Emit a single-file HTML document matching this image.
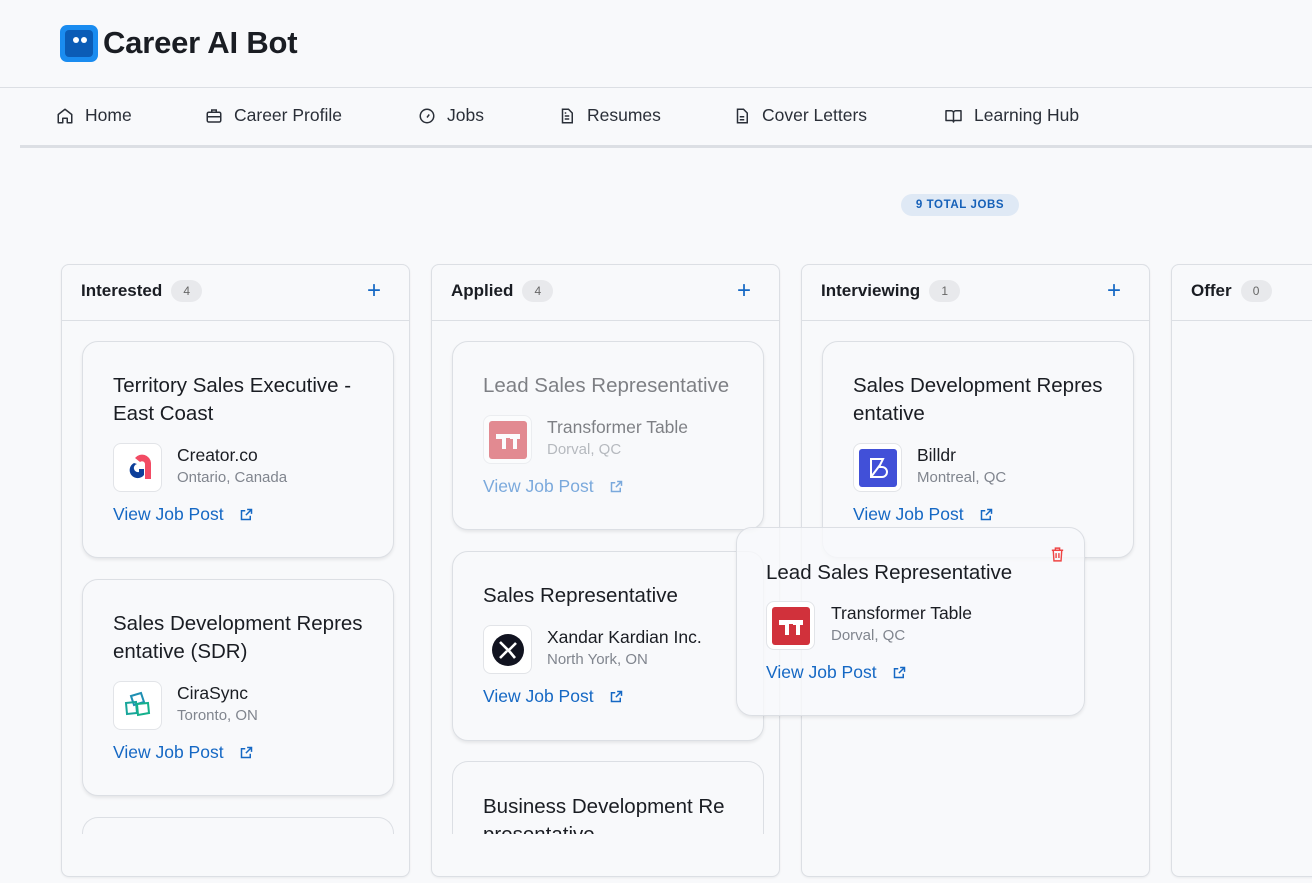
<!DOCTYPE html>
<html><head><meta charset="utf-8"><style>
*{box-sizing:border-box;margin:0;padding:0}
body{width:1312px;height:883px;overflow:hidden;background:#f8f9fb;font-family:"Liberation Sans",Arial,sans-serif;color:#1a1d23;position:relative}
.abs{position:absolute}
.hdr{left:0;top:0;width:1312px;height:88px;border-bottom:1px solid #dcdfe4}
.logo{left:60px;top:25px;width:38px;height:37px;border-radius:7px;background:#1a8cf0}
.logo i{position:absolute;left:5px;top:5px;width:28px;height:27px;border-radius:4px;background:#0b5cb6}
.logo b{position:absolute;top:12px;width:6px;height:6px;border-radius:50%;background:#fff}
.title{left:103px;top:25px;font-size:31px;font-weight:bold;letter-spacing:-0.2px}
.navline{left:20px;top:145px;width:1292px;height:3px;background:#dcdfe4}
.ni{position:absolute;top:105px;font-size:17.5px;color:#2a2f38;display:flex;align-items:center}
.ni svg{margin-right:11px}
.badge{left:901px;top:194px;width:118px;height:22px;border-radius:11px;background:#dfe9f5;color:#1560b8;font-size:11.5px;font-weight:bold;letter-spacing:0.6px;text-align:center;line-height:22px}
.col{position:absolute;top:264px;width:349px;height:613px;border:1px solid #dcdfe4;border-radius:8px;background:#f8f9fb;box-shadow:0 1px 2px rgba(0,0,0,.06);overflow:hidden}
.ch{height:56px;border-bottom:1px solid #dcdfe4;display:flex;align-items:center;padding-left:19px;padding-bottom:3px;font-size:17px;font-weight:bold}
.cnt{display:inline-block;margin-left:9px;width:31px;height:22px;border-radius:11px;background:#e8e9ec;color:#666;font-size:12px;font-weight:normal;text-align:center;line-height:22px}
.plus{position:absolute;right:28px;top:15px;font-size:24px;color:#1568c4;font-weight:normal;line-height:22px}
.card{position:absolute;width:312px;border:1px solid #dcdfe4;border-radius:16px;background:#f8f9fb;box-shadow:0 2px 3px rgba(0,0,0,.08);overflow:hidden}
.ct{position:absolute;left:30px;top:30px;width:262px;font-size:20.5px;line-height:28px;color:#1a1d23}
.lg{position:absolute;left:30px;width:49px;height:49px;border:1px solid #e2e4e8;border-radius:8px;background:#fff;display:flex;align-items:center;justify-content:center}
.cn{position:absolute;left:94px;font-size:17.5px;color:#1a1d23}
.cl{position:absolute;left:94px;font-size:15px;color:#80858e}
.vj{position:absolute;left:30px;font-size:17.5px;color:#1568c4;display:flex;align-items:center}
.vj svg{margin-left:15px}
</style></head><body>
<div class="abs hdr"></div>
<div class="abs logo"><i></i><b style="left:13px"></b><b style="left:21px"></b></div>
<div class="abs title">Career AI Bot</div>
<div class="abs navline"></div>

<div class="ni" style="left:56px"><svg width="18" height="18" viewBox="0 0 24 24" fill="none" stroke="#2a2f38" stroke-width="2" stroke-linejoin="round"><path d="M3 10l9-7 9 7v11H15v-6h-6v6H3z"/></svg>Home</div>
<div class="ni" style="left:205px"><svg width="18" height="18" viewBox="0 0 24 24" fill="none" stroke="#2a2f38" stroke-width="2"><rect x="3" y="7" width="18" height="13" rx="2"/><path d="M9 7V4h6v3M3 13h18"/></svg>Career Profile</div>
<div class="ni" style="left:418px"><svg width="18" height="18" viewBox="0 0 24 24" fill="none" stroke="#2a2f38" stroke-width="2"><circle cx="12" cy="12" r="9"/><path d="M12 14l3-4"/></svg>Jobs</div>
<div class="ni" style="left:558px"><svg width="18" height="18" viewBox="0 0 24 24" fill="none" stroke="#2a2f38" stroke-width="2"><path d="M6 3h8l5 5v13H6z"/><path d="M9 12h6M9 16h6M9 8h2"/></svg>Resumes</div>
<div class="ni" style="left:733px"><svg width="18" height="18" viewBox="0 0 24 24" fill="none" stroke="#2a2f38" stroke-width="2"><path d="M6 3h8l5 5v13H6z"/><path d="M9 13h6M9 17h6"/></svg>Cover Letters</div>
<div class="ni" style="left:944px"><svg width="19" height="18" viewBox="0 0 24 24" fill="none" stroke="#2a2f38" stroke-width="2" stroke-linejoin="round"><path d="M2 5h7a3 3 0 0 1 3 3v12a2 2 0 0 0-2-2H2zM22 5h-7a3 3 0 0 0-3 3v12a2 2 0 0 1 2-2h8z"/></svg>Learning Hub</div>

<div class="abs badge">9 TOTAL JOBS</div>

<!-- Interested -->
<div class="col" style="left:61px">
<div class="ch">Interested<span class="cnt">4</span><span class="plus">+</span></div>
<div class="card" style="left:20px;top:76px;height:217px">
 <div class="ct">Territory Sales Executive - East Coast</div>
 <div class="lg" style="top:101px"><svg width="30" height="28" viewBox="0 0 30 28"><path d="M12 4a9 9 0 0 1 16 5v16h-6V10a3 3 0 0 0-5-2z" fill="#f24b64"/><path d="M11 9a8 8 0 1 0 10 12v-6h-5v3a3 3 0 1 1-2-8z" fill="#0d3f9a"/></svg></div>
 <div class="cn" style="top:103px">Creator.co</div>
 <div class="cl" style="top:127px">Ontario, Canada</div>
 <div class="vj" style="top:162px">View Job Post<svg width="15" height="15" viewBox="0 0 24 24" fill="none" stroke="#1568c4" stroke-width="2.4"><path d="M13 4h7v7M20 4l-9 9M18 14v6H4V6h6"/></svg></div>
</div>
<div class="card" style="left:20px;top:314px;height:217px">
 <div class="ct">Sales Development Repres entative (SDR)</div>
 <div class="lg" style="top:101px"><svg width="32" height="32" viewBox="0 0 32 32" fill="none" stroke-width="2"><path d="M9 6l10-3 3 9-10 3z" stroke="#1f8fb3"/><path d="M4 13l10-1 1 11-10 1z" stroke="#17a59a"/><path d="M15 14l11-1 1 10-11 2z" stroke="#14b08c"/></svg></div>
 <div class="cn" style="top:103px">CiraSync</div>
 <div class="cl" style="top:127px">Toronto, ON</div>
 <div class="vj" style="top:162px">View Job Post<svg width="15" height="15" viewBox="0 0 24 24" fill="none" stroke="#1568c4" stroke-width="2.4"><path d="M13 4h7v7M20 4l-9 9M18 14v6H4V6h6"/></svg></div>
</div>
<div class="card" style="left:20px;top:552px;height:17px;box-shadow:none;border-bottom:none;border-radius:16px 16px 0 0"></div>
</div>

<!-- Applied -->
<div class="col" style="left:431px">
<div class="ch">Applied<span class="cnt">4</span><span class="plus">+</span></div>
<div class="card" style="left:20px;top:76px;height:189px">
 <div style="opacity:.55">
 <div class="ct">Lead Sales Representative</div>
 <div class="lg" style="top:73px"><svg width="38" height="38" viewBox="0 0 38 38"><rect width="38" height="38" rx="3" fill="#d1313b"/><path d="M7 13h24v5h-3v10h-4V18h-3v-0H17v10h-4V18h-6z" fill="#fff"/><rect x="17" y="17" width="4" height="1" fill="#d1313b"/></svg></div>
 <div class="cn" style="top:75px">Transformer Table</div>
 <div class="cl" style="top:99px">Dorval, QC</div>
 <div class="vj" style="top:134px">View Job Post<svg width="15" height="15" viewBox="0 0 24 24" fill="none" stroke="#1568c4" stroke-width="2.4"><path d="M13 4h7v7M20 4l-9 9M18 14v6H4V6h6"/></svg></div>
 </div>
</div>
<div class="card" style="left:20px;top:286px;height:190px">
 <div class="ct">Sales Representative</div>
 <div class="lg" style="top:73px"><svg width="34" height="34" viewBox="0 0 34 34"><circle cx="17" cy="17" r="16" fill="#111320"/><path d="M9 9l10 10M9 25l7-7M18 17l7-7M19 19l5 6" stroke="#fff" stroke-width="2.6"/></svg></div>
 <div class="cn" style="top:75px">Xandar Kardian Inc.</div>
 <div class="cl" style="top:99px">North York, ON</div>
 <div class="vj" style="top:134px">View Job Post<svg width="15" height="15" viewBox="0 0 24 24" fill="none" stroke="#1568c4" stroke-width="2.4"><path d="M13 4h7v7M20 4l-9 9M18 14v6H4V6h6"/></svg></div>
</div>
<div class="card" style="left:20px;top:496px;height:73px;box-shadow:none;border-bottom:none;border-radius:16px 16px 0 0">
 <div class="ct" style="top:31px">Business Development Re presentative</div>
</div>
</div>

<!-- Interviewing -->
<div class="col" style="left:801px">
<div class="ch">Interviewing<span class="cnt">1</span><span class="plus">+</span></div>
<div class="card" style="left:20px;top:76px;height:217px">
 <div class="ct">Sales Development Repres entative</div>
 <div class="lg" style="top:101px"><svg width="38" height="38" viewBox="0 0 38 38"><rect width="38" height="38" rx="3" fill="#4150d8"/><path d="M12 10h12l-4 8h3a5 5 0 0 1 0 10H12zM12 28l9-12" fill="none" stroke="#fff" stroke-width="2"/></svg></div>
 <div class="cn" style="top:103px">Billdr</div>
 <div class="cl" style="top:127px">Montreal, QC</div>
 <div class="vj" style="top:162px">View Job Post<svg width="15" height="15" viewBox="0 0 24 24" fill="none" stroke="#1568c4" stroke-width="2.4"><path d="M13 4h7v7M20 4l-9 9M18 14v6H4V6h6"/></svg></div>
</div>
</div>

<!-- Offer -->
<div class="col" style="left:1171px">
<div class="ch">Offer<span class="cnt">0</span></div>
</div>

<!-- Dragged card -->
<div class="card" style="left:736px;top:527px;width:349px;height:189px;background:rgba(248,249,251,.82)">
 <svg style="position:absolute;left:312px;top:18px" width="17" height="17" viewBox="0 0 24 24" fill="none" stroke="#ef4444" stroke-width="2"><path d="M4 6h16M9 6V3h6v3M6 6l1 15h10l1-15M10 10v7M14 10v7"/></svg>
 <div class="ct" style="top:31px;left:29px">Lead Sales Representative</div>
 <div class="lg" style="top:73px;left:29px"><svg width="38" height="38" viewBox="0 0 38 38"><rect width="38" height="38" rx="3" fill="#d1313b"/><path d="M7 13h24v5h-3v10h-4V18h-3v-0H17v10h-4V18h-6z" fill="#fff"/><rect x="17" y="17" width="4" height="1" fill="#d1313b"/></svg></div>
 <div class="cn" style="top:75px;left:94px">Transformer Table</div>
 <div class="cl" style="top:99px;left:94px">Dorval, QC</div>
 <div class="vj" style="top:134px;left:29px">View Job Post<svg width="15" height="15" viewBox="0 0 24 24" fill="none" stroke="#1568c4" stroke-width="2.4"><path d="M13 4h7v7M20 4l-9 9M18 14v6H4V6h6"/></svg></div>
</div>
</body></html>
